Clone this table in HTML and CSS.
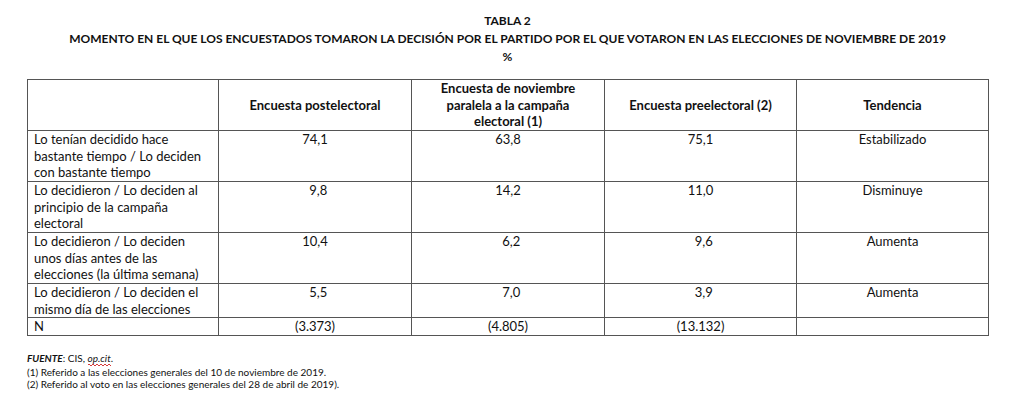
FILE: index.html
```html
<!DOCTYPE html>
<html lang="es">
<head>
<meta charset="utf-8">
<title>Tabla 2</title>
<link rel="stylesheet" href="styles.css">
</head>
<body>
<div class="page">
  <div class="title">
    <div>TABLA 2</div>
    <div>MOMENTO EN EL QUE LOS ENCUESTADOS TOMARON LA DECISIÓN POR EL PARTIDO POR EL QUE VOTARON EN LAS ELECCIONES DE NOVIEMBRE DE 2019</div>
    <div>%</div>
  </div>
  <table class="data">
    <colgroup>
      <col class="c1"><col class="c2"><col class="c3"><col class="c4"><col class="c5">
    </colgroup>
    <thead>
      <tr>
        <th></th>
        <th>Encuesta postelectoral</th>
        <th>Encuesta de noviembre<br>paralela a la campaña<br>electoral (1)</th>
        <th>Encuesta preelectoral (2)</th>
        <th>Tendencia</th>
      </tr>
    </thead>
    <tbody>
      <tr>
        <td class="label">Lo tenían decidido hace<br>bastante tiempo / Lo deciden<br>con bastante tiempo</td>
        <td>74,1</td><td>63,8</td><td>75,1</td><td>Estabilizado</td>
      </tr>
      <tr>
        <td class="label">Lo decidieron / Lo deciden al<br>principio de la campaña<br>electoral</td>
        <td><span class="fig">9,8</span></td><td>14,2</td><td>11,0</td><td>Disminuye</td>
      </tr>
      <tr>
        <td class="label">Lo decidieron / Lo deciden<br>unos días antes de las<br>elecciones (la última semana)</td>
        <td>10,4</td><td><span class="fig">6,2</span></td><td><span class="fig">9,6</span></td><td>Aumenta</td>
      </tr>
      <tr>
        <td class="label">Lo decidieron / Lo deciden el<br>mismo día de las elecciones</td>
        <td><span class="fig">5,5</span></td><td><span class="fig">7,0</span></td><td><span class="fig">3,9</span></td><td>Aumenta</td>
      </tr>
      <tr>
        <td class="label">N</td>
        <td>(3.373)</td><td>(4.805)</td><td>(13.132)</td><td></td>
      </tr>
    </tbody>
  </table>
  <div class="notes">
    <div><b class="src">FUENTE</b>: CIS, <i class="spell">op.cit</i>.</div>
    <div>(1) Referido a las elecciones generales del 10 de noviembre de 2019.</div>
    <div>(2) Referido al voto en las elecciones generales del 28 de abril de 2019).</div>
  </div>
</div>
</body>
</html>
```
FILE: styles.css
```css
html, body {
  margin: 0;
  padding: 0;
  background: #ffffff;
}
body {
  font-family: Lato, "Open Sans", sans-serif;
  color: #111111;
}
.page {
  width: 961px;
  margin-left: 27px;
  padding-top: 12px;
}
.title {
  text-align: center;
  font-weight: bold;
  font-size: 12px;
  line-height: 18px;
  white-space: nowrap;
}
.data {
  margin-top: 13px;
  width: 961px;
  border-collapse: collapse;
  table-layout: fixed;
  font-size: 13px;
  line-height: 16.67px;
  border: 1px solid #777777;
}
.c1 { width: 191px; }
.c2 { width: 193px; }
.c3 { width: 193px; }
.c4 { width: 192px; }
.c5 { width: 192px; }
.data th,
.data td {
  border: 1px solid #555555;
  padding: 0 6px;
  text-align: center;
  white-space: nowrap;
}
.data th {
  font-weight: bold;
  vertical-align: middle;
  height: 50px;
}
.data td {
  vertical-align: top;
}
.data td.label {
  text-align: left;
}
.fig {
  padding-left: 0.5em;
}
.notes {
  margin-top: 16px;
  font-size: 10px;
  line-height: 12px;
}
.src {
  font-style: italic;
  font-weight: bold;
}
.spell {
  display: inline-block;
  line-height: 11px;
  padding-bottom: 2px;
  background-image:
    linear-gradient(45deg, transparent 40%, #d63a3a 40%, #d63a3a 60%, transparent 60%),
    linear-gradient(-45deg, transparent 40%, #d63a3a 40%, #d63a3a 60%, transparent 60%);
  background-size: 4px 2px;
  background-position: 0 100%, 2px 100%;
  background-repeat: repeat-x;
}
```
